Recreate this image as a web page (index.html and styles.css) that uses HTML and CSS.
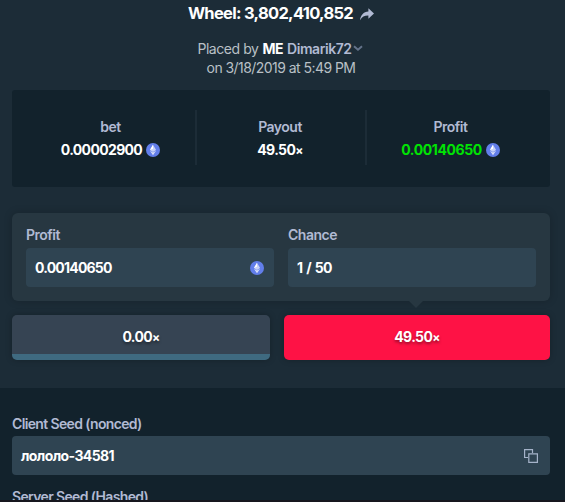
FILE: index.html
```
<!DOCTYPE html>
<html lang="en">
<head>
    <meta charset="UTF-8">
    <meta name="viewport" content="width=device-width, initial-scale=1.0">
    <title>Wheel: 3,802,410,852</title>
    <link rel="stylesheet" href="styles.css">
</head>
<body>
    <svg class="defs" width="0" height="0">
        <symbol id="eth" viewBox="0 0 14 14">
            <circle cx="7" cy="7" r="7" fill="#627eea"/>
            <path d="M7 1.8L3.9 7.1 7 8.9l3.1-1.8z" fill="#fff" fill-opacity=".65"/>
            <path d="M7 1.8L3.9 7.1 7 5.7z" fill="#fff"/>
            <path d="M7 9.6L3.9 7.8 7 12.2l3.1-4.4z" fill="#fff" fill-opacity=".75"/>
        </symbol>
    </svg>

    <div class="top">
        <h1>
            <span class="title">Wheel: 3,802,410,852</span>
            <svg class="share" width="14" height="13" viewBox="0 0 14 13">
                <path d="M8.4.3L14 5.5l-5.6 5.2V7.6C4.6 7.5 2 8.8.1 12.3.3 7.2 3.6 3.7 8.4 3.4z" fill="#b1bad3"/>
            </svg>
        </h1>
        <p class="placed">
            <span class="by">Placed by</span> <b class="tag">ME</b> <span class="user">Dimarik72</span>
            <svg width="10" height="7" viewBox="0 0 10 7"><path d="M1 1.2l4 3.6 4-3.6" fill="none" stroke="#64738a" stroke-width="1.9"/></svg>
        </p>
        <p class="date"><span>on 3/18/2019 at 5:49 PM</span></p>

        <div class="stats">
            <div class="stat">
                <span class="label">bet</span>
                <span class="value"><span class="amount">0.00002900</span><svg class="coin"><use href="#eth"/></svg></span>
            </div>
            <div class="stat">
                <span class="label">Payout</span>
                <span class="value"><span class="multi">49.50<small>×</small></span></span>
            </div>
            <div class="stat">
                <span class="label">Profit</span>
                <span class="value win"><span class="amount">0.00140650</span><svg class="coin"><use href="#eth"/></svg></span>
            </div>
        </div>

        <div class="details">
            <div class="field">
                <span class="label">Profit</span>
                <div class="input"><span class="profit">0.00140650</span><svg class="coin"><use href="#eth"/></svg></div>
            </div>
            <div class="field">
                <span class="label">Chance</span>
                <div class="input"><span class="chance">1 / 50</span></div>
            </div>
        </div>

        <div class="payouts">
            <div class="payout zero"><span class="multi">0.00<small>×</small></span></div>
            <div class="payout red"><span class="multi">49.50<small>×</small></span></div>
        </div>
    </div>

    <div class="seeds">
        <span class="label client">Client Seed (nonced)</span>
        <div class="input">
            <span class="seed">лололо-34581</span>
            <svg class="copy" width="14" height="14" viewBox="0 0 14 14">
                <path d="M4 8.5H.6V.6h7.9V4M4.8 4.8h8.6v8.6H4.8z" fill="none" stroke="#a5b3c9" stroke-width="1.2"/>
            </svg>
        </div>
        <span class="label server">Server Seed (Hashed)</span>
    </div>
</body>
</html>
```
FILE: styles.css
```
* {
    box-sizing: border-box;
}

body {
    margin: 0;
    height: 502px;
    overflow: hidden;
    font-family: Inter, "Noto Sans", sans-serif;
    font-size: 14px;
    line-height: 19px;
    background-color: #1c2c37;
    color: #fff;
}

.defs {
    position: absolute;
}

.top {
    height: 388px;
    padding: 1px 15px 0 12px;
}

h1 {
    display: flex;
    justify-content: center;
    align-items: center;
    gap: 7px;
    height: 24px;
    margin: 0 0 14px;
    font-size: 16.5px;
    font-weight: 700;
    letter-spacing: -0.7px;
}

.share {
    margin-top: 2px;
}

.placed,
.date {
    display: flex;
    justify-content: center;
    align-items: center;
    height: 19px;
    margin: 0;
    color: #b9c0c6;
    letter-spacing: -0.55px;
}

.placed {
    gap: 4px;
    padding-right: 2px;
    letter-spacing: -0.45px;
}

.placed svg {
    margin-left: -3px;
}

.tag {
    color: #fff;
}

.user {
    font-weight: 600;
    color: #b1bad3;
}

.label {
    font-weight: 600;
    color: #b1bad3;
    letter-spacing: -0.5px;
}

.coin {
    width: 14px;
    height: 14px;
}

.stats {
    display: grid;
    grid-template-columns: 169px 170px 1fr;
    height: 97px;
    margin-top: 13px;
    padding: 20px 14px 22px;
    border-radius: 3px;
    background-color: #12222c;
}

.stat {
    display: flex;
    flex-direction: column;
    align-items: center;
    gap: 4px;
    padding-top: 7px;
}

.stat + .stat {
    padding-right: 2px;
    border-left: 2px solid #1c2c37;
}

.value {
    display: flex;
    align-items: center;
    gap: 4px;
    font-weight: 700;
    letter-spacing: -0.65px;
}

.win {
    color: #00e403;
    letter-spacing: -0.4px;
}

.multi small {
    font-size: 12px;
}

.details {
    position: relative;
    display: grid;
    grid-template-columns: 1fr 1fr;
    gap: 14px;
    height: 88px;
    margin-top: 26px;
    padding: 12px 14px 14px;
    border-radius: 6px;
    background-color: #273741;
    box-shadow: 0 0 8px rgba(0, 0, 0, 0.2);
}

.details::after {
    content: "";
    position: absolute;
    top: 100%;
    left: 397px;
    border: 7px solid transparent;
    border-top-color: #273741;
    border-bottom: 0;
}

.field .label {
    display: block;
    margin-bottom: 4px;
}

.input {
    display: flex;
    justify-content: space-between;
    align-items: center;
    height: 39px;
    padding: 0 10px 0 9px;
    border-radius: 4px;
    background-color: #2f4452;
    font-weight: 700;
    letter-spacing: -0.8px;
}

.profit,
.chance,
.seed {
    margin-top: -1px;
}

.chance {
    letter-spacing: -0.6px;
    word-spacing: 1px;
}

.seed {
    letter-spacing: -0.6px;
}

.payouts {
    display: grid;
    grid-template-columns: 258px 1fr;
    gap: 14px;
    margin-top: 14px;
}

.payout {
    display: flex;
    justify-content: center;
    align-items: center;
    height: 45px;
    padding-bottom: 1px;
    border-radius: 5px;
    font-weight: 700;
    letter-spacing: -0.65px;
    text-shadow: 0 2px 3px rgba(0, 0, 0, 0.4);
    box-shadow: 0 0 6px rgba(0, 0, 0, 0.25);
}

.zero {
    background: linear-gradient(#364453 39px, #3f6a80 39px);
}

.red {
    background-color: #fe1245;
}

.seeds {
    height: 114px;
    padding: 26px 15px 0 12px;
    border-bottom: 2px solid #17161e;
    background-color: #12222c;
    overflow: hidden;
}

.seeds .label {
    display: block;
    letter-spacing: -0.64px;
}

.seeds .input {
    margin: 3px 0 12px;
    padding-right: 12px;
}
```
